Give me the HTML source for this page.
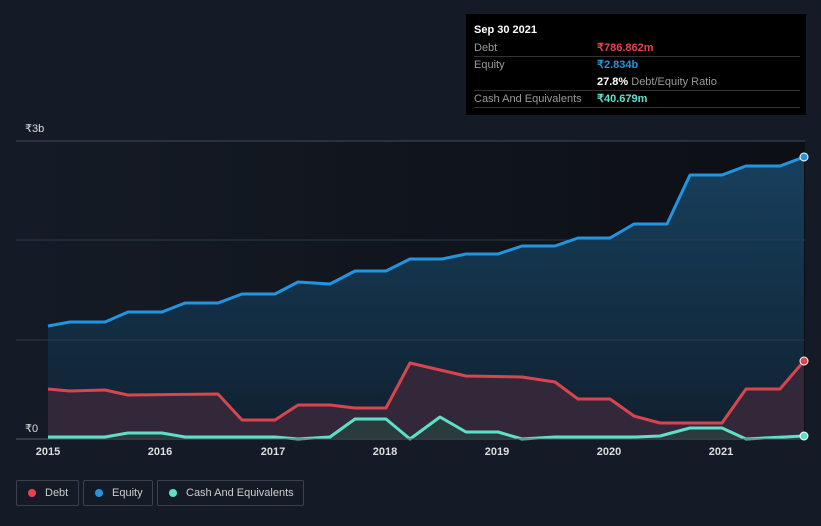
<!DOCTYPE html>
<html><head><meta charset="utf-8"><style>
body{margin:0;width:821px;height:526px;background:#151b26;font-family:"Liberation Sans",sans-serif;overflow:hidden;position:relative}
.tt{position:absolute;left:466px;top:14px;width:340px;height:101px;background:#000;color:#fff;font-size:11px}
.tt .r{position:absolute;left:8px;right:6px;height:16px;border-bottom:1px solid #333;line-height:17px;color:#999;white-space:nowrap}
.tt .v{position:absolute;left:123px;font-weight:bold}
.leg{position:absolute;top:480px;height:26px;border:1px solid #3a414c;border-radius:2px;color:#ccc;font-size:11px;line-height:24px;box-sizing:border-box;white-space:nowrap}
.leg i{position:absolute;left:11px;top:8px;width:8px;height:8px;border-radius:50%}
.leg span{position:absolute;left:28px;top:0}
.ax{position:absolute;top:446px;color:#ddd;font-size:11px;font-weight:bold;transform:translateX(-50%)}
</style></head><body>
<svg width="821" height="526" style="position:absolute;left:0;top:0">
<defs>
<linearGradient id="bg" x1="0" x2="1" y1="0" y2="0"><stop offset="0" stop-color="#151b26"/><stop offset="1" stop-color="#0c0f14"/></linearGradient>
<linearGradient id="eq" x1="0" x2="0" y1="0" y2="1"><stop offset="0" stop-color="#17405e"/><stop offset="1" stop-color="#10202f"/></linearGradient>
</defs>
<rect x="16" y="141" width="789" height="297" fill="url(#bg)"/>
<polygon fill="url(#eq)" points="48,438 48,326 70,322 105,322 128,312 162,312 185,303 218,303 242,294 275,294 298,282 330,284 355,271 386,271 410,259 442,259 466,254 498,254 522,246 555,246 578,238 610,238 634,224 667,224 690,175 722,175 746,166 780,166 804,157 804,438"/>
<line x1="16" y1="141" x2="805" y2="141" stroke="#444a55"/>
<line x1="16" y1="240" x2="805" y2="240" stroke="#2a3a4a"/>
<line x1="16" y1="340" x2="805" y2="340" stroke="#2a3a4a"/>
<polygon fill="#33283a" points="48,438 48,389 70,391 105,390 128,395 218,394 242,420 275,420 298,405 330,405 355,408 386,408 410,363 466,376 522,377 555,382 578,399 610,399 634,416 660,423 722,423 746,389 780,389 804,361 804,438"/>
<polygon fill="#2a3b3e" points="48,438 48,437 105,437 128,433 162,433 185,437 275,437 298,439 330,437 355,419 386,419 410,439 440,417 466,432 498,432 522,439 555,437 634,437 660,436 690,428 722,428 746,439 804,436 804,438"/>
<g fill="none" stroke-width="3" stroke-linejoin="round">
<polyline stroke="#2394df" points="48,326 70,322 105,322 128,312 162,312 185,303 218,303 242,294 275,294 298,282 330,284 355,271 386,271 410,259 442,259 466,254 498,254 522,246 555,246 578,238 610,238 634,224 667,224 690,175 722,175 746,166 780,166 804,157"/>
<polyline stroke="#d9444f" points="48,389 70,391 105,390 128,395 218,394 242,420 275,420 298,405 330,405 355,408 386,408 410,363 466,376 522,377 555,382 578,399 610,399 634,416 660,423 722,423 746,389 780,389 804,361"/>
<polyline stroke="#5ee0c8" points="48,437 105,437 128,433 162,433 185,437 275,437 298,439 330,437 355,419 386,419 410,439 440,417 466,432 498,432 522,439 555,437 634,437 660,436 690,428 722,428 746,439 804,436"/>
</g>
<line x1="16" y1="439" x2="805" y2="439" stroke="#555b66"/>
<circle cx="804" cy="157" r="4" fill="#2394df" stroke="#fff"/>
<circle cx="804" cy="361" r="4" fill="#d9444f" stroke="#fff"/>
<circle cx="804" cy="436" r="4" fill="#5ee0c8" stroke="#fff"/>
</svg>
<div style="position:absolute;left:25px;top:122px;color:#ddd;font-size:11px">₹3b</div>
<div style="position:absolute;left:25px;top:422px;color:#ddd;font-size:11px">₹0</div>
<div class="ax" style="left:48px">2015</div><div class="ax" style="left:160px">2016</div><div class="ax" style="left:273px">2017</div><div class="ax" style="left:385px">2018</div><div class="ax" style="left:497px">2019</div><div class="ax" style="left:609px">2020</div><div class="ax" style="left:721px">2021</div>
<div class="tt">
<div style="position:absolute;left:8px;top:10px;font-weight:bold">Sep 30 2021</div>
<div class="r" style="top:26px">Debt<span class="v" style="color:#e5434d">₹786.862m</span></div>
<div class="r" style="top:43px;border:0">Equity<span class="v" style="color:#2394df">₹2.834b</span></div>
<div class="r" style="top:60px"><span class="v" style="left:123px;color:#fff">27.8% <span style="color:#999;font-weight:normal">Debt/Equity Ratio</span></span></div>
<div class="r" style="top:77px">Cash And Equivalents<span class="v" style="color:#5ee0c8">₹40.679m</span></div>
</div>
<div class="leg" style="left:16px;width:63px"><i style="background:#e5434d"></i><span>Debt</span></div>
<div class="leg" style="left:83px;width:70px"><i style="background:#2394df"></i><span>Equity</span></div>
<div class="leg" style="left:157px;width:147px"><i style="background:#5ee0c8"></i><span>Cash And Equivalents</span></div>
</body></html>
